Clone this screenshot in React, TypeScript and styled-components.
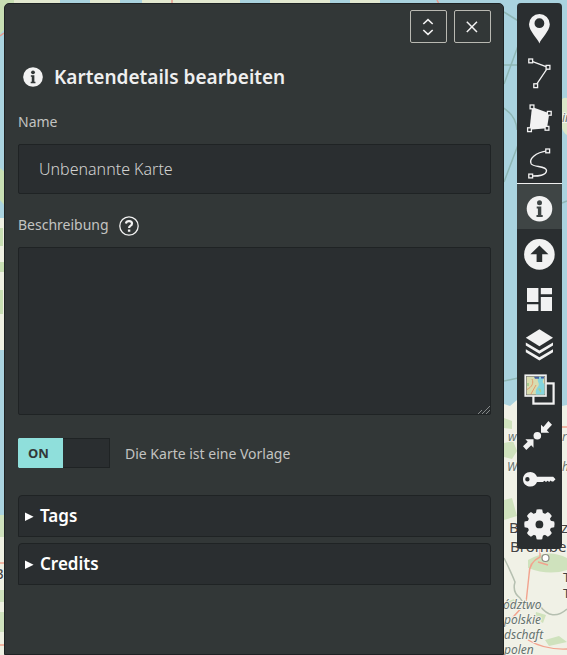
import React, { useState } from "react";
import styled, { createGlobalStyle, css } from "styled-components";

const color = {
  panel: "#323737",
  dark: "#2a2e30",
  edge: "#1f2324",
  active: "#3f4545",
  icon: "#f2f2f2",
  text: "#c3c3c1",
  accent: "#8fdfdb",
};

const GlobalStyle = createGlobalStyle`
  *, *::before, *::after { box-sizing: border-box; }
  html { background: #aad3df; }
  body { margin: 0; }
  body, button, input, textarea {
    font-family: "Noto Sans", "Open Sans", sans-serif;
  }
`;

const Page = styled.div`
  height: 100vh;
  display: flex;
  align-items: flex-start;
  gap: 13px;
  padding: 3px 5px 0 4px;
  overflow: hidden;
`;

const MapCanvas = styled.svg`
  position: fixed;
  inset: 0;
  z-index: -1;
`;

const Panel = styled.section`
  flex: 1;
  min-width: 0;
  align-self: stretch;
  padding: 6px 12px 0 13px;
  overflow: hidden;
  background: ${color.panel};
  border: 1px solid ${color.edge};
  border-radius: 5px 5px 0 0;
  color: ${color.text};
`;

const PanelActions = styled.header`
  display: flex;
  justify-content: flex-end;
  gap: 7px;
`;

const ActionButton = styled.button`
  width: 37px;
  height: 33px;
  display: grid;
  place-items: center;
  padding: 0 1px 0 0;
  background: transparent;
  border: 1px solid #b9b9b2;
  border-radius: 2px;
  cursor: pointer;
`;

const Title = styled.h3`
  display: flex;
  align-items: center;
  gap: 11px;
  margin: 19px 0 0 5px;
  height: 30px;
  font-size: 19px;
  font-weight: 600;
  line-height: 30px;
  color: #efefef;
`;

const Label = styled.label`
  display: block;
  font-size: 14px;
  font-weight: 400;
  line-height: 22px;
`;

const LabelRow = styled.div`
  display: flex;
  align-items: center;
  gap: 10px;
  height: 22px;
  margin-top: 20px;
`;

const HelpButton = styled.button`
  display: flex;
  padding: 1px 0 0;
  border: 0;
  background: none;
  cursor: pointer;
`;

const NameField = styled.div`
  margin-top: 19px;
`;

const fieldLook = css`
  display: block;
  width: 100%;
  background: ${color.dark};
  border: 1px solid ${color.edge};
  border-radius: 2px;
  color: #d2d2d0;
  font-size: 16px;
  font-weight: 300;
  outline: none;
`;

const TextInput = styled.input`
  ${fieldLook}
  height: 50px;
  margin-top: 11px;
  padding: 0 20px;
`;

const TextArea = styled.textarea`
  ${fieldLook}
  height: 168px;
  margin-top: 11px;
  padding: 12px 20px;
  resize: vertical;

  &::-webkit-resizer {
    background:
      linear-gradient(135deg, ${color.dark} 60%, transparent 60%),
      repeating-linear-gradient(135deg, #858989 0 1px, ${color.dark} 1px 3px);
  }
`;

const SwitchLabel = styled.label`
  display: flex;
  align-items: center;
  gap: 15px;
  margin-top: 23px;
  font-size: 14px;
  font-weight: 400;
  cursor: pointer;
`;

const SwitchInput = styled.input`
  position: absolute;
  opacity: 0;
`;

const SwitchTrack = styled.span<{ $on: boolean }>`
  display: flex;
  width: 92px;
  height: 30px;
  justify-content: ${(p) => (p.$on ? "flex-start" : "flex-end")};
  background: ${color.dark};
  border: 1px solid ${color.edge};
  border-left-color: ${(p) => (p.$on ? color.accent : color.edge)};
`;

const SwitchThumb = styled.span<{ $on: boolean }>`
  width: 44px;
  margin: -1px 0;
  padding-left: 9px;
  background: ${(p) => (p.$on ? color.accent : "#555b5b")};
  color: ${color.panel};
  font-size: 13px;
  font-weight: 700;
  line-height: 30px;
`;

const Sections = styled.div`
  display: grid;
  gap: 6px;
  margin-top: 27px;
`;

const Section = styled.details`
  background: ${color.dark};
  border: 1px solid ${color.edge};
  border-radius: 4px 4px 0 0;
`;

const SectionSummary = styled.summary`
  display: flex;
  align-items: center;
  gap: 6px;
  padding: 0 5px;
  color: #fff;
  font-size: 17px;
  font-weight: 600;
  line-height: 40px;
  cursor: pointer;
`;

const Toolbar = styled.nav`
  flex: none;
  width: 45px;
  padding-bottom: 5px;
  background: ${color.dark};
  border-radius: 4px;
`;

const ToolGroup = styled.div`
  & + & { border-top: 1px solid #efefef; }
`;

const ToolButton = styled.button<{ $active?: boolean }>`
  display: block;
  width: 45px;
  height: 45px;
  padding: 10px 7px 4px;
  border: 0;
  background: ${(p) => (p.$active ? color.active : "transparent")};
  cursor: pointer;
`;

const Glyph = styled.svg`
  display: block;
  overflow: visible;
`;

const Node = ({ x, y }: { x: number; y: number }) => (
  <rect x={x - 1.9} y={y - 1.9} width="3.8" height="3.8" fill={color.dark} stroke={color.icon} strokeWidth="1.3" />
);

const InfoGlyph = ({ size, hole }: { size: number; hole: string }) => (
  <Glyph width={size} height={size} viewBox="0 0 26 26">
    <circle cx="13" cy="13" r="12.8" fill={color.icon} />
    <circle cx="13" cy="6.9" r="2.5" fill={hole} />
    <path d="M10.2 10.8h4.6v8.4h1.4v2H10v-2h1.4v-6.4h-1.2z" fill={hole} />
  </Glyph>
);

const icons: Record<string, React.ReactNode> = {
  marker: (
    <path fillRule="evenodd" d="M15.4 30.5C14 26 5 18 5 11.3a10.4 10.4 0 0 1 20.8 0C25.8 18 16.8 26 15.4 30.5zM15.4 5.3a4.9 4.9 0 1 0 0 9.8a4.9 4.9 0 1 0 0-9.8z" fill={color.icon} />
  ),
  line: (
    <>
      <path d="M6.7 2.9L24 9.3L11.7 27.7" fill="none" stroke={color.icon} strokeWidth="1.3" />
      <Node x={6.7} y={2.9} /><Node x={24} y={9.3} /><Node x={11.7} y={27.7} />
    </>
  ),
  polygon: (
    <>
      <path d="M8 3.9L25.3 10.3L23 25.3L5.5 26.7z" fill={color.icon} />
      <Node x={8} y={3.9} /><Node x={25.3} y={10.3} /><Node x={23} y={25.3} /><Node x={5.5} y={26.7} />
    </>
  ),
  curve: (
    <>
      <path d="M23.7 2.9C11 4.5 4.5 11 7.3 16C9.5 19.5 22.5 17.5 22.5 22.5C22.5 27.5 14 28.3 6.7 28" fill="none" stroke={color.icon} strokeWidth="1.4" />
      <Node x={23.7} y={2.9} /><Node x={6.7} y={28} />
    </>
  ),
  upload: (
    <>
      <circle cx="15.4" cy="15.4" r="15.3" fill={color.icon} />
      <path d="M15.4 6.5L24.4 15.2H18.2V23H12.6V15.2H6.4z" fill={color.dark} />
    </>
  ),
  board: (
    <path d="M3 4h11.4v14H3zM3 20.3h11.4V27H3zM16.8 4H28v6.3H16.8zM16.8 13H28v14H16.8z" fill={color.icon} />
  ),
  layers: (
    <>
      <path d="M15.4 0.3L29 8.8L15.4 17.3L1.8 8.8z" fill={color.icon} />
      <path d="M1.8 13.6L15.4 21.6L29 13.6V16.6L15.4 24.8L1.8 16.6zM1.8 20.2L15.4 28.2L29 20.2V23.2L15.4 31.4L1.8 23.2z" fill={color.icon} />
    </>
  ),
  tiles: (
    <>
      <rect x="9.4" y="9.4" width="20.2" height="20.2" fill="none" stroke={color.icon} strokeWidth="2.2" />
      <rect x="0.4" y="0.4" width="22.4" height="22.4" fill={color.icon} />
      <rect x="2.4" y="2.4" width="18.4" height="18.4" fill="#d9dcae" stroke="#77776f" strokeWidth="0.7" />
      <path d="M15 2.8C11 8 18 9 13 14C11 17 12 19 12 20.4H20.4V10C17 8 20 5 20 2.8z" fill="#84d5de" />
      <path d="M10 2.8h5v2h-4zM17 2.8h3v1.6h-3z" fill="#4361a5" />
      <path d="M3 15.5C8 13 10 9 8 5M7 20L12 11" fill="none" stroke="#e69a6c" strokeWidth="1" />
      <path d="M3 9h2v3H3zM14 15c2-2 4 1 3 4" fill="#a9cf91" />
    </>
  ),
  center: (
    <>
      <circle cx="13.3" cy="16.7" r="3.8" fill={color.icon} />
      <path d="M17 5.8V13.8H25.2L22.8 11.3L28 5.8L24.4 2.1L19.4 8zM9.5 20.2H1.4L3.7 22.7L-1 27.3L2.3 31L7.2 26.3L9.5 28.8z" fill={color.icon} />
    </>
  ),
  key: (
    <path fillRule="evenodd" d="M6.4 8C10 8 12 10.2 13 12.8H29.2L31.5 15.2L29.3 17.6H27.8L26.5 16.6L25.2 18L23.6 16.7L22 18L20.4 16.8L19 18H13C12 20.6 10 22.6 6.4 22.6C2 22.6-1 19.5-1 15.3S2 8 6.4 8zM3.4 13.1a2.2 2.2 0 1 0 0 4.4a2.2 2.2 0 1 0 0-4.4z" fill={color.icon} />
  ),
  settings: (
    <>
      <circle cx="15.4" cy="15.4" r="7.9" fill="none" stroke={color.icon} strokeWidth="8" />
      {[0, 45, 90, 135, 180, 225, 270, 315].map((a) => (
        <path key={a} d="M11.6 5.5L12.6 0.6Q15.4-0.2 18.2 0.6L19.2 5.5z" fill={color.icon} transform={`rotate(${a} 15.4 15.4)`} />
      ))}
    </>
  ),
};

const drawTools = [
  { id: "marker", label: "Marker zeichnen" },
  { id: "line", label: "Linie zeichnen" },
  { id: "polygon", label: "Polygon zeichnen" },
  { id: "curve", label: "Route zeichnen" },
];

const editTools = [
  { id: "info", label: "Kartendetails bearbeiten" },
  { id: "upload", label: "Daten importieren" },
  { id: "board", label: "Ansicht" },
  { id: "layers", label: "Ebenen verwalten" },
  { id: "tiles", label: "Kartenhintergrund ändern" },
  { id: "center", label: "Kartenmittelpunkt" },
  { id: "key", label: "Berechtigungen" },
  { id: "settings", label: "Einstellungen" },
];

const Tool = ({ id, label, active }: { id: string; label: string; active?: boolean }) => (
  <ToolButton type="button" $active={active} aria-label={label} aria-pressed={active}>
    {id === "info" ? (
      <Glyph width="31" height="31" viewBox="0 0 31 31">
        <g transform="translate(2.5 1.8)"><InfoGlyph size={26} hole={color.active} /></g>
      </Glyph>
    ) : (
      <Glyph width="31" height="31" viewBox="0 0 31 31">{icons[id]}</Glyph>
    )}
  </ToolButton>
);

const Triangle = () => (
  <Glyph width="10" height="10" viewBox="0 0 10 10">
    <path d="M1 1.6L9.6 5.8L1 10z" fill="#fff" />
  </Glyph>
);

const MapBackground = () => (
  <MapCanvas width="100%" height="100%" aria-hidden="true">
    <rect width="100%" height="100%" fill="#aad3df" />
    <path d="M0 0H380V3H0z" fill="#e3e9d0" />
    <path d="M0 0H14V12L4 30L0 34zM0 168L5 172V206L0 200z" fill="#c8dfb3" />
    <path d="M0 218H5V350H0z" fill="#eef0e2" />
    <path d="M0 228h3v18H0zM0 262h4v10H0zM0 290h3v24H0z" fill="#c8dfb3" />
    <path d="M60 0h30v4H60zM120 0h22v4h-22zM240 0h30v4h-30zM330 0h20v4h-20z" fill="#aad3df" />
    <path d="M172 0v4M437 0l2 4M0 36l4-3" stroke="#e8998a" strokeWidth="1.5" />
    <path d="M0 515H5V655H0z" fill="#eef0e2" />
    <path d="M0 515h5v22H0zM0 590h5v12H0zM0 612h5v20H0z" fill="#cfe2bd" />
    <path d="M504 404L510 406L517 400Q540 412 567 405V655H504z" fill="#f0f1e6" />
    <path d="M504 443l9-2 4 10-5 8-8-2zM504 418l8 3v8l-8-1zM504 500l8-2 5 18-13 4zM528 560q20-12 39-2v12q-18 6-39-2zM504 603l10-4 4 6-14 5zM536 612l10 3-3 8-8-4zM545 640l14-4 8 6-18 4z" fill="#cfe2bd" />
    <path d="M567 98q-8-2-5 12l-1 16q3 8 6 9z" fill="#dce7c8" />
    <path d="M500 106Q516 114 517 130M504 182L518 145M504 12L520 22M518 46L504 84M504 65h14M562 203l5-2M504 381l14-3" fill="none" stroke="#8eb6b4" strokeWidth="1.5" />
    <path d="M540 549v8Q529 562 529 575L526 603L504 627M538 562l10 3M528 640Q545 650 567 649M562 427h5M0 563h4M0 645h4" fill="none" stroke="#f2a38e" strokeWidth="1.4" />
    <path d="M504 558Q512 574 515 582Q512 592 520 598Q524 607 540 606Q552 622 567 609" fill="none" stroke="#b5bfb0" strokeWidth="1.5" />
    <circle cx="545.5" cy="558" r="3.5" fill="#fff" stroke="#8b8b83" strokeWidth="1.2" />
    <g fill="#444" fontFamily="Noto Sans, sans-serif" fontSize="15" stroke="#f4f4ec" strokeWidth="2" paintOrder="stroke">
      <text x="509" y="533">B</text>
      <text x="561" y="533">z</text>
      <text x="510" y="552">Brombe</text>
      <text x="563" y="582" fontSize="13">T</text>
      <text x="563" y="598" fontSize="13">T</text>
      <text x="-6" y="579">B</text>
    </g>
    <g fill="#66736f" fontFamily="Noto Sans, sans-serif" fontSize="12" fontStyle="italic" stroke="#f4f4ec" strokeWidth="2" paintOrder="stroke">
      <text x="508" y="441">w</text>
      <text x="507" y="471">W</text>
      <text x="562" y="441">r</text>
      <text x="562" y="471">h</text>
      <text x="562" y="122">in</text>
      <text x="503" y="609">ództwo</text>
      <text x="504" y="624">polskie</text>
      <text x="504" y="639">dschaft</text>
      <text x="504" y="654">polen</text>
    </g>
  </MapCanvas>
);

export default function App() {
  const [name, setName] = useState("Unbenannte Karte");
  const [template, setTemplate] = useState(true);

  return (
    <>
      <GlobalStyle />
      <MapBackground />
      <Page>
        <Panel>
          <PanelActions>
            <ActionButton type="button" aria-label="Panel vergrößern">
              <Glyph width="16" height="18" viewBox="0 0 16 18" fill="none" stroke={color.icon} strokeWidth="1.6">
                <path d="M3.3 6L8 1.6L12.7 6M3.3 12L8 16.4L12.7 12" />
              </Glyph>
            </ActionButton>
            <ActionButton type="button" aria-label="Schließen">
              <Glyph width="16" height="16" viewBox="0 0 16 16" fill="none" stroke={color.icon} strokeWidth="1.5">
                <path d="M2.8 2.8L13 13M13 2.8L2.8 13" />
              </Glyph>
            </ActionButton>
          </PanelActions>
          <Title>
            <InfoGlyph size={20} hole={color.panel} />
            Kartendetails bearbeiten
          </Title>
          <NameField>
            <Label htmlFor="map-name">Name</Label>
            <TextInput id="map-name" value={name} onChange={(e) => setName(e.target.value)} />
          </NameField>
          <LabelRow>
            <Label htmlFor="map-description">Beschreibung</Label>
            <HelpButton type="button" aria-label="Hilfe">
              <Glyph width="20" height="20" viewBox="0 0 20 20" fill="none" stroke={color.icon}>
                <circle cx="10" cy="10" r="9.2" strokeWidth="1.3" />
                <path d="M6.9 7.4Q7.4 5.1 10 5.1Q13 5.1 13 7.5Q13 9 11.4 9.9Q10.1 10.7 10.1 12" strokeWidth="2.2" />
                <path d="M8.9 13.4h2.4v2.4H8.9z" fill={color.icon} stroke="none" />
              </Glyph>
            </HelpButton>
          </LabelRow>
          <TextArea id="map-description" />
          <SwitchLabel>
            <SwitchInput type="checkbox" checked={template} onChange={(e) => setTemplate(e.target.checked)} />
            <SwitchTrack $on={template} aria-hidden="true">
              <SwitchThumb $on={template}>{template ? "ON" : "OFF"}</SwitchThumb>
            </SwitchTrack>
            Die Karte ist eine Vorlage
          </SwitchLabel>
          <Sections>
            <Section>
              <SectionSummary><Triangle />Tags</SectionSummary>
            </Section>
            <Section>
              <SectionSummary><Triangle />Credits</SectionSummary>
            </Section>
          </Sections>
        </Panel>
        <Toolbar aria-label="Bearbeitungswerkzeuge">
          <ToolGroup>
            {drawTools.map((t) => <Tool key={t.id} {...t} />)}
          </ToolGroup>
          <ToolGroup>
            {editTools.map((t) => <Tool key={t.id} {...t} active={t.id === "info"} />)}
          </ToolGroup>
        </Toolbar>
      </Page>
    </>
  );
}
